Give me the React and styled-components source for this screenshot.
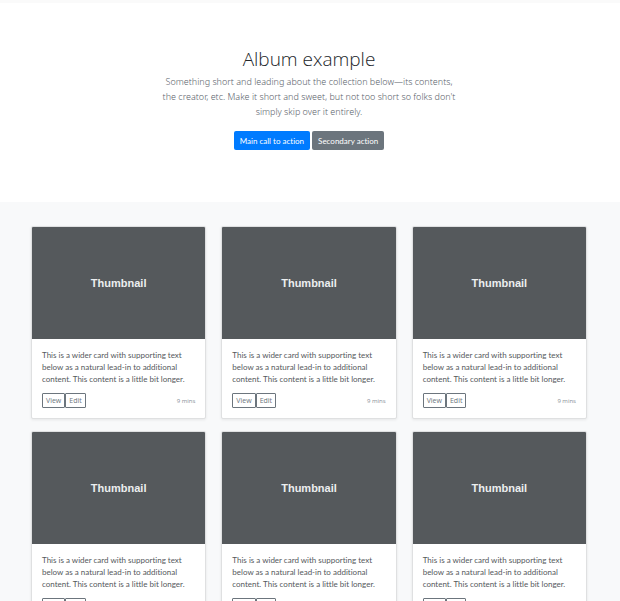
import React from "react";
import styled, { createGlobalStyle } from "styled-components";

const GlobalStyle = createGlobalStyle`
  *, *::before, *::after { box-sizing: border-box; }
  body {
    margin: 0;
    background: #fff;
    color: #212529;
    font-family: Lato, "Noto Sans", sans-serif;
    font-size: 8px;
    font-variant-ligatures: none;
    line-height: 12px;
  }
`;

const Page = styled.main`
  border-top: 3px solid #fafafa;
`;

const Hero = styled.section`
  padding: 44px 18px 52px 16px;
  text-align: center;
`;

const HeroInner = styled.div`
  max-width: 300px;
  margin: 0 auto;
`;

const Title = styled.h1`
  margin: 0 0 3px;
  font-family: "Open Sans", sans-serif;
  font-size: 19px;
  font-weight: 300;
  line-height: 24px;
`;

const Lead = styled.p`
  margin: 0 0 12px;
  color: #59626a;
  font-family: "Noto Sans", sans-serif;
  font-size: 9px;
  font-weight: 300;
  line-height: 15px;
`;

const Actions = styled.div`
  display: flex;
  justify-content: center;
  gap: 2px;
`;

const ActionLink = styled.a`
  padding: 4px 6px 3px;
  border-radius: 2px;
  background: ${({ $primary }) => ($primary ? "#007bff" : "#6c757d")};
  color: #fff;
  font-size: 8px;
  line-height: 12px;
  text-decoration: none;
`;

const Album = styled.section`
  padding: 24px 33px 24px 31px;
  background: #f8f9fa;
`;

const Grid = styled.div`
  display: grid;
  grid-template-columns: repeat(3, 1fr);
  gap: 12px 15px;
`;

const Card = styled.article`
  border: 1px solid #dfe0e1;
  border-radius: 2px;
  background: #fff;
  box-shadow: 0 1px 3px rgba(0, 0, 0, 0.08);
`;

const Thumbnail = styled.div`
  display: flex;
  align-items: center;
  justify-content: center;
  height: 112px;
  border-radius: 1px 1px 0 0;
  background: #55595c;
  color: #eceeef;
  font-family: "Liberation Sans", Arial, sans-serif;
  font-size: 11px;
  font-weight: 700;
`;

const CardBody = styled.div`
  padding: 10px;
`;

const CardText = styled.p`
  margin: 0 0 8px;
  color: #55595c;
`;

const CardFooter = styled.div`
  display: flex;
  align-items: center;
  justify-content: space-between;
`;

const ButtonGroup = styled.div`
  display: flex;
`;

const SmallButton = styled.button`
  padding: 1px 3px 0;
  border: 1px solid #6c757d;
  border-radius: 1px;
  background: #fff;
  color: #6c757d;
  font-family: "Open Sans", sans-serif;
  font-size: 7px;
  line-height: 12px;
`;

const Duration = styled.small`
  color: #868e96;
  font-family: "Open Sans", sans-serif;
  font-size: 6px;
`;

const albums = [1, 2, 3, 4, 5, 6];

export default function App() {
  return (
    <Page>
      <GlobalStyle />
      <Hero>
        <HeroInner>
          <Title>Album example</Title>
          <Lead>
            Something short and leading about the collection below—its contents,
            the creator, etc. Make it short and sweet, but not too short so folks
            don't simply skip over it entirely.
          </Lead>
          <Actions>
            <ActionLink href="#main" $primary>Main call to action</ActionLink>
            <ActionLink href="#secondary">Secondary action</ActionLink>
          </Actions>
        </HeroInner>
      </Hero>
      <Album>
        <Grid>
          {albums.map((id) => (
            <Card key={id}>
              <Thumbnail>Thumbnail</Thumbnail>
              <CardBody>
                <CardText>
                  This is a wider card with supporting text below as a natural
                  lead-in to additional content. This content is a little bit
                  longer.
                </CardText>
                <CardFooter>
                  <ButtonGroup>
                    <SmallButton type="button">View</SmallButton>
                    <SmallButton type="button">Edit</SmallButton>
                  </ButtonGroup>
                  <Duration>9 mins</Duration>
                </CardFooter>
              </CardBody>
            </Card>
          ))}
        </Grid>
      </Album>
    </Page>
  );
}
